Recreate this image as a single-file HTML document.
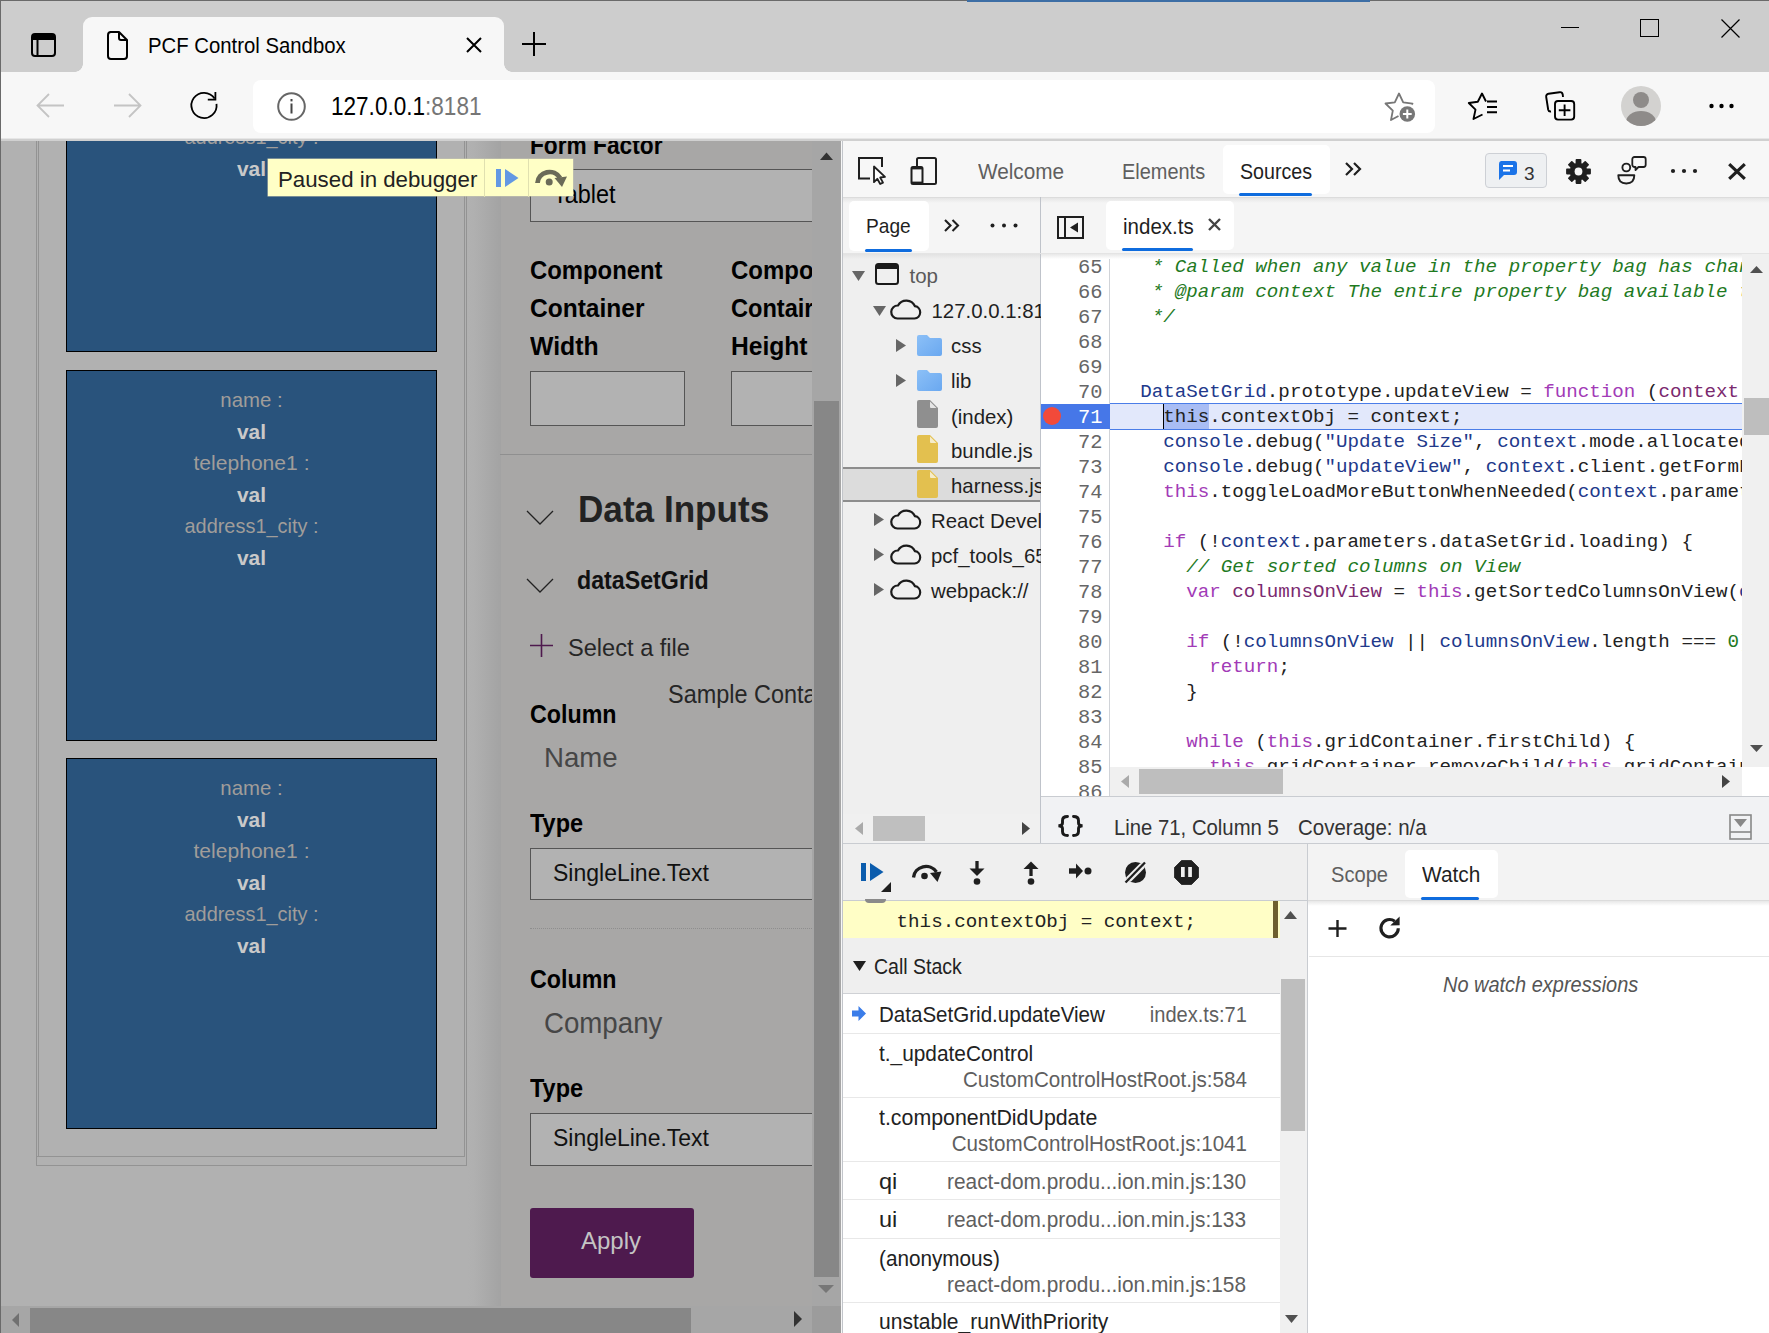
<!DOCTYPE html>
<html><head><meta charset="utf-8">
<style>
*{box-sizing:border-box;margin:0;padding:0}
html,body{width:1769px;height:1333px;overflow:hidden;background:#cdcdcd;font-family:"Liberation Sans",sans-serif}
.a{position:absolute}
.t{position:absolute;white-space:nowrap;line-height:1}
.m{font-family:"Liberation Mono",monospace}
svg{position:absolute;overflow:visible}
</style></head><body>

<div class="a" style="left:0px;top:140px;width:842px;height:1193px;background:#b1b1b1;"></div>
<div class="a" style="left:36px;top:140px;width:1px;height:1026px;background:#939393;"></div>
<div class="a" style="left:38px;top:140px;width:1px;height:1017px;background:#939393;"></div>
<div class="a" style="left:464px;top:140px;width:1px;height:1017px;background:#939393;"></div>
<div class="a" style="left:466px;top:140px;width:1px;height:1026px;background:#939393;"></div>
<div class="a" style="left:36px;top:1156px;width:429px;height:1px;background:#939393;"></div>
<div class="a" style="left:36px;top:1165px;width:431px;height:1px;background:#939393;"></div>
<div class="a" style="left:66px;top:-19px;width:371px;height:371px;background:#29537c;border:1px solid #000"></div>
<div class="t" style="left:66px;width:371px;text-align:center;top:-0.5px;font-size:21px;color:#a09d9a;transform:scaleX(0.9704)">name :</div>
<div class="t" style="left:66px;width:371px;text-align:center;top:31.5px;font-size:21px;font-weight:700;color:#c9c9c9;transform:scaleX(0.9930)">val</div>
<div class="t" style="left:66px;width:371px;text-align:center;top:62.5px;font-size:21px;color:#a09d9a;transform:scaleX(1.0034)">telephone1 :</div>
<div class="t" style="left:66px;width:371px;text-align:center;top:94.5px;font-size:21px;font-weight:700;color:#c9c9c9;transform:scaleX(0.9930)">val</div>
<div class="t" style="left:66px;width:371px;text-align:center;top:125.5px;font-size:21px;color:#a09d9a;transform:scaleX(0.9487)">address1_city :</div>
<div class="t" style="left:66px;width:371px;text-align:center;top:157.5px;font-size:21px;font-weight:700;color:#c9c9c9;transform:scaleX(0.9930)">val</div>
<div class="a" style="left:66px;top:370px;width:371px;height:371px;background:#29537c;border:1px solid #000"></div>
<div class="t" style="left:66px;width:371px;text-align:center;top:388.5px;font-size:21px;color:#a09d9a;transform:scaleX(0.9704)">name :</div>
<div class="t" style="left:66px;width:371px;text-align:center;top:420.5px;font-size:21px;font-weight:700;color:#c9c9c9;transform:scaleX(0.9930)">val</div>
<div class="t" style="left:66px;width:371px;text-align:center;top:451.5px;font-size:21px;color:#a09d9a;transform:scaleX(1.0034)">telephone1 :</div>
<div class="t" style="left:66px;width:371px;text-align:center;top:483.5px;font-size:21px;font-weight:700;color:#c9c9c9;transform:scaleX(0.9930)">val</div>
<div class="t" style="left:66px;width:371px;text-align:center;top:514.5px;font-size:21px;color:#a09d9a;transform:scaleX(0.9487)">address1_city :</div>
<div class="t" style="left:66px;width:371px;text-align:center;top:546.5px;font-size:21px;font-weight:700;color:#c9c9c9;transform:scaleX(0.9930)">val</div>
<div class="a" style="left:66px;top:758px;width:371px;height:371px;background:#29537c;border:1px solid #000"></div>
<div class="t" style="left:66px;width:371px;text-align:center;top:776.5px;font-size:21px;color:#a09d9a;transform:scaleX(0.9704)">name :</div>
<div class="t" style="left:66px;width:371px;text-align:center;top:808.5px;font-size:21px;font-weight:700;color:#c9c9c9;transform:scaleX(0.9930)">val</div>
<div class="t" style="left:66px;width:371px;text-align:center;top:839.5px;font-size:21px;color:#a09d9a;transform:scaleX(1.0034)">telephone1 :</div>
<div class="t" style="left:66px;width:371px;text-align:center;top:871.5px;font-size:21px;font-weight:700;color:#c9c9c9;transform:scaleX(0.9930)">val</div>
<div class="t" style="left:66px;width:371px;text-align:center;top:902.5px;font-size:21px;color:#a09d9a;transform:scaleX(0.9487)">address1_city :</div>
<div class="t" style="left:66px;width:371px;text-align:center;top:934.5px;font-size:21px;font-weight:700;color:#c9c9c9;transform:scaleX(0.9930)">val</div>
<div class="a" style="left:467px;top:140px;width:34px;height:1166px;background:linear-gradient(to right,#b1b1b1 0%,#b0b0b0 20%,#a3a3a3 100%)"></div>
<div class="a" style="left:501px;top:140px;width:311px;height:1166px;background:#a8a7a6;"></div>
<div class="t" style="left:530px;top:132.5px;font-size:25px;color:#000;font-weight:700;font-style:normal;font-family:'Liberation Sans';transform:scaleX(0.9084);transform-origin:0 0;">Form Factor</div>
<div class="a" style="left:530px;top:169px;width:290px;height:53px;background:#b2b2b2;border:1px solid #555;border-right:none"></div>
<div class="t" style="left:553px;top:182.3px;font-size:25px;color:#000;font-weight:400;font-style:normal;font-family:'Liberation Sans';transform:scaleX(0.9368);transform-origin:0 0;">Tablet</div>
<div class="t" style="left:530px;top:258.4px;font-size:25.5px;color:#000;font-weight:700;font-style:normal;font-family:'Liberation Sans';transform:scaleX(0.9356);transform-origin:0 0;">Component</div>
<div class="t" style="left:731px;top:258.4px;font-size:25.5px;color:#000;font-weight:700;font-style:normal;font-family:'Liberation Sans';transform:scaleX(0.9397);transform-origin:0 0;">Compo</div>
<div class="t" style="left:530px;top:295.6px;font-size:25.5px;color:#000;font-weight:700;font-style:normal;font-family:'Liberation Sans';transform:scaleX(0.9623);transform-origin:0 0;">Container</div>
<div class="t" style="left:731px;top:295.6px;font-size:25.5px;color:#000;font-weight:700;font-style:normal;font-family:'Liberation Sans';transform:scaleX(0.9247);transform-origin:0 0;">Contair</div>
<div class="t" style="left:530px;top:334.0px;font-size:25.5px;color:#000;font-weight:700;font-style:normal;font-family:'Liberation Sans';transform:scaleX(0.9710);transform-origin:0 0;">Width</div>
<div class="t" style="left:731px;top:334.0px;font-size:25.5px;color:#000;font-weight:700;font-style:normal;font-family:'Liberation Sans';transform:scaleX(0.9647);transform-origin:0 0;">Height</div>
<div class="a" style="left:530px;top:371px;width:155px;height:55px;background:#b2b2b2;border:1px solid #555"></div>
<div class="a" style="left:731px;top:371px;width:90px;height:55px;background:#b2b2b2;border:1px solid #555;border-right:none"></div>
<div class="a" style="left:500px;top:454px;width:312px;height:1px;background:#8f8f8f;"></div>
<svg style="left:526px;top:510px" width="28" height="15" viewBox="0 0 28 15"><path d="M1 1 L14 14 L27 1" fill="none" stroke="#222" stroke-width="1.3"/></svg>
<div class="t" style="left:578px;top:491.2px;font-size:37.5px;color:#222;font-weight:700;font-style:normal;font-family:'Liberation Sans';transform:scaleX(0.9366);transform-origin:0 0;">Data Inputs</div>
<svg style="left:526px;top:578px" width="28" height="15" viewBox="0 0 28 15"><path d="M1 1 L14 14 L27 1" fill="none" stroke="#222" stroke-width="1.3"/></svg>
<div class="t" style="left:577px;top:567.0px;font-size:26px;color:#111;font-weight:700;font-style:normal;font-family:'Liberation Sans';transform:scaleX(0.8927);transform-origin:0 0;">dataSetGrid</div>
<svg style="left:530px;top:634px" width="23" height="23" viewBox="0 0 23 23"><path d="M11.5 0 V23 M0 11.5 H23" stroke="#4e1a4e" stroke-width="1.6"/></svg>
<div class="t" style="left:568px;top:635.5px;font-size:24.6px;color:#262626;font-weight:400;font-style:normal;font-family:'Liberation Sans';transform:scaleX(0.9594);transform-origin:0 0;">Select a file</div>
<div class="t" style="left:668px;top:682.2px;font-size:25px;color:#262626;font-weight:400;font-style:normal;font-family:'Liberation Sans';transform:scaleX(0.9373);transform-origin:0 0;">Sample Conta</div>
<div class="t" style="left:530px;top:701.5px;font-size:25.2px;color:#000;font-weight:700;font-style:normal;font-family:'Liberation Sans';transform:scaleX(0.9228);transform-origin:0 0;">Column</div>
<div class="t" style="left:544px;top:743.6px;font-size:28px;color:#464646;font-weight:400;font-style:normal;font-family:'Liberation Sans';transform:scaleX(0.9863);transform-origin:0 0;">Name</div>
<div class="t" style="left:530px;top:811.3px;font-size:25px;color:#000;font-weight:700;font-style:normal;font-family:'Liberation Sans';transform:scaleX(0.9398);transform-origin:0 0;">Type</div>
<div class="a" style="left:530px;top:848px;width:290px;height:52px;background:#b2b2b2;border:1px solid #555;border-right:none"></div>
<div class="t" style="left:553px;top:862.2px;font-size:23px;color:#111;font-weight:400;font-style:normal;font-family:'Liberation Sans';">SingleLine.Text</div>
<div class="a" style="left:530px;top:928px;width:282px;height:0;border-top:1px dotted #8e8e8e"></div>
<div class="t" style="left:530px;top:966.5px;font-size:25.2px;color:#000;font-weight:700;font-style:normal;font-family:'Liberation Sans';transform:scaleX(0.9228);transform-origin:0 0;">Column</div>
<div class="t" style="left:544px;top:1009.3px;font-size:28.8px;color:#464646;font-weight:400;font-style:normal;font-family:'Liberation Sans';transform:scaleX(0.9601);transform-origin:0 0;">Company</div>
<div class="t" style="left:530px;top:1076.2px;font-size:25px;color:#000;font-weight:700;font-style:normal;font-family:'Liberation Sans';transform:scaleX(0.9398);transform-origin:0 0;">Type</div>
<div class="a" style="left:530px;top:1113px;width:290px;height:53px;background:#b2b2b2;border:1px solid #555;border-right:none"></div>
<div class="t" style="left:553px;top:1126.9px;font-size:23px;color:#111;font-weight:400;font-style:normal;font-family:'Liberation Sans';">SingleLine.Text</div>
<div class="a" style="left:530px;top:1208px;width:164px;height:70px;background:#4e1a4e;border-radius:3px"></div>
<div class="t" style="left:581px;top:1229.4px;font-size:24px;color:#c4c4c4;font-weight:400;font-style:normal;font-family:'Liberation Sans';">Apply</div>
<div class="a" style="left:812px;top:140px;width:30px;height:1166px;background:#a6a6a6;"></div>
<svg style="left:820px;top:152px" width="13" height="8" viewBox="0 0 13 8"><path d="M0 8 L6.5 0.5 L13 8Z" fill="#333"/></svg>
<div class="a" style="left:814px;top:401px;width:25px;height:876px;background:#878787;"></div>
<svg style="left:818px;top:1284px" width="16" height="10" viewBox="0 0 16 10"><path d="M0 1 L8 9 L16 1Z" fill="#777"/></svg>
<div class="a" style="left:0px;top:1306px;width:812px;height:27px;background:#a6a6a6;"></div>
<div class="a" style="left:30px;top:1308px;width:661px;height:25px;background:#878787;"></div>
<svg style="left:12px;top:1313px" width="7" height="14" viewBox="0 0 7 14"><path d="M7 0 L0 7 L7 14Z" fill="#707070"/></svg>
<svg style="left:794px;top:1311px" width="8" height="16" viewBox="0 0 8 16"><path d="M0 0 L8 8 L0 16Z" fill="#333"/></svg>
<div class="a" style="left:812px;top:1306px;width:30px;height:27px;background:#9c9c9c;"></div>
<div class="a" style="left:268px;top:159px;width:305px;height:37px;background:#ffffc6;box-shadow:0 0 0 0.5px #c8c8b0"></div>
<div class="t" style="left:278px;top:168.6px;font-size:21.7px;color:#222;font-weight:400;font-style:normal;font-family:'Liberation Sans';transform:scaleX(1.0266);transform-origin:0 0;">Paused in debugger</div>
<div class="a" style="left:484px;top:159px;width:1px;height:38px;background:#e0e0b0;"></div>
<div class="a" style="left:528px;top:159px;width:1px;height:38px;background:#e0e0b0;"></div>
<svg style="left:496px;top:169px" width="23" height="18" viewBox="0 0 23 18"><rect x="0" y="0" width="5" height="18" fill="#6398e3"/><path d="M9 0 L22.5 9 L9 18Z" fill="#6398e3"/></svg>
<svg style="left:533px;top:166px" width="36" height="24" viewBox="0 0 36 24"><path d="M4.5 17 A12 11.5 0 0 1 27 12" fill="none" stroke="#6b6b58" stroke-width="4.8"/><path d="M21.5 12 L34 10.5 L29 21Z" fill="#6b6b58"/><circle cx="16.2" cy="16" r="3.5" fill="#6b6b58"/></svg>
<div class="a" style="left:841px;top:140px;width:1px;height:1193px;background:#f7f7f7;"></div>
<div class="a" style="left:842px;top:140px;width:1px;height:1193px;background:#c2c5ca;"></div>
<div class="a" style="left:843px;top:140px;width:926px;height:57px;background:#f7f7f7;"></div>
<div class="a" style="left:843px;top:197px;width:926px;height:1px;background:#dcdcdc;"></div>
<div class="a" style="left:843px;top:198px;width:926px;height:5px;background:linear-gradient(#e6e6e6,#f5f5f5)"></div>
<svg style="left:858px;top:157px" width="28" height="28" viewBox="0 0 28 28"><path d="M12 21.5 H1 V1 H24 V10" fill="none" stroke="#1f1f1f" stroke-width="2"/><path d="M16 9.5 V25.2 L19.3 21.8 L22.2 27 L25 25.6 L22.2 20.5 L27 19.8Z" fill="#fff" stroke="#1f1f1f" stroke-width="1.8" stroke-linejoin="round"/></svg>
<svg style="left:910px;top:157px" width="28" height="28" viewBox="0 0 28 28"><rect x="7" y="1" width="19" height="26" rx="1.5" fill="none" stroke="#1f1f1f" stroke-width="2"/><rect x="1.5" y="10" width="11" height="17" rx="1.5" fill="#f7f7f7" stroke="#1f1f1f" stroke-width="2"/><rect x="1.5" y="9.8" width="11" height="2.6" fill="#1f1f1f"/><rect x="1.5" y="24.6" width="11" height="2.4" fill="#1f1f1f"/></svg>
<div class="t" style="left:977.5px;top:160.9px;font-size:22px;color:#5f5f5f;font-weight:400;font-style:normal;font-family:'Liberation Sans';transform:scaleX(0.9433);transform-origin:0 0;">Welcome</div>
<div class="t" style="left:1121.5px;top:160.9px;font-size:22px;color:#5f5f5f;font-weight:400;font-style:normal;font-family:'Liberation Sans';transform:scaleX(0.9062);transform-origin:0 0;">Elements</div>
<div class="a" style="left:1223px;top:145px;width:107px;height:49px;background:#ffffff;border-radius:5px"></div>
<div class="t" style="left:1240px;top:160.9px;font-size:22px;color:#1f1f1f;font-weight:400;font-style:normal;font-family:'Liberation Sans';transform:scaleX(0.8935);transform-origin:0 0;">Sources</div>
<div class="a" style="left:1239px;top:193px;width:73px;height:3px;background:#0f6cde;border-radius:2px"></div>
<svg style="left:1345px;top:162px" width="17" height="14" viewBox="0 0 17 14"><path d="M1 1 L7 7 L1 13 M9 1 L15 7 L9 13" fill="none" stroke="#1f1f1f" stroke-width="2.2"/></svg>
<div class="a" style="left:1485px;top:153px;width:62px;height:35px;background:#eef0f2;border:1px solid #cdd0d5;border-radius:4px"></div>
<svg style="left:1498px;top:161px" width="20" height="20" viewBox="0 0 20 20"><path d="M3 0 H16 a3 3 0 0 1 3 3 V11 a3 3 0 0 1 -3 3 H6 L1 19 V3 a3 3 0 0 1 2 -3Z" fill="#1a73e8"/><path d="M5 5 H15 M5 9.5 H12" stroke="#fff" stroke-width="1.8"/></svg>
<div class="t" style="left:1524px;top:163.6px;font-size:19px;color:#333;font-weight:400;font-style:normal;font-family:'Liberation Sans';">3</div>
<svg style="left:1566px;top:159px" width="25" height="25" viewBox="0 0 25 25"><g transform="translate(12.5 12.5)"><circle r="8.8" fill="#1f1f1f"/><g fill="#1f1f1f"><rect x="-2.9" y="-12.4" width="5.8" height="6" rx="0.8" transform="rotate(0)"/><rect x="-2.9" y="-12.4" width="5.8" height="6" rx="0.8" transform="rotate(45)"/><rect x="-2.9" y="-12.4" width="5.8" height="6" rx="0.8" transform="rotate(90)"/><rect x="-2.9" y="-12.4" width="5.8" height="6" rx="0.8" transform="rotate(135)"/><rect x="-2.9" y="-12.4" width="5.8" height="6" rx="0.8" transform="rotate(180)"/><rect x="-2.9" y="-12.4" width="5.8" height="6" rx="0.8" transform="rotate(225)"/><rect x="-2.9" y="-12.4" width="5.8" height="6" rx="0.8" transform="rotate(270)"/><rect x="-2.9" y="-12.4" width="5.8" height="6" rx="0.8" transform="rotate(315)"/></g><circle r="3.9" fill="#f7f7f7"/></g></svg>
<svg style="left:1617px;top:156px" width="30" height="30" viewBox="0 0 30 30"><circle cx="9.3" cy="11.5" r="3.9" fill="none" stroke="#1f1f1f" stroke-width="1.9"/><path d="M1.3 19.3 H17.3 Q17.3 27.5 9.3 27.5 Q1.3 27.5 1.3 19.3Z" fill="none" stroke="#1f1f1f" stroke-width="1.9" stroke-linejoin="round"/><path d="M17.5 1 H26.5 a2.2 2.2 0 0 1 2.2 2.2 V8.8 a2.2 2.2 0 0 1 -2.2 2.2 H21.5 L18.5 14 V11 H17.5 a2.2 2.2 0 0 1 -2.2 -2.2 V3.2 a2.2 2.2 0 0 1 2.2 -2.2Z" fill="none" stroke="#1f1f1f" stroke-width="1.8" stroke-linejoin="round"/></svg>
<svg style="left:1670px;top:168px" width="28" height="6" viewBox="0 0 28 6"><circle cx="3" cy="3" r="2.1" fill="#1f1f1f"/><circle cx="14" cy="3" r="2.1" fill="#1f1f1f"/><circle cx="25" cy="3" r="2.1" fill="#1f1f1f"/></svg>
<svg style="left:1728px;top:163px" width="18" height="17" viewBox="0 0 18 17"><path d="M1.2 1.2 L16.8 15.8 M16.8 1.2 L1.2 15.8" stroke="#1f1f1f" stroke-width="3.2"/></svg>
<div class="a" style="left:843px;top:203px;width:926px;height:50px;background:#f5f5f5;"></div>
<div class="a" style="left:849px;top:201px;width:80px;height:50px;background:#ffffff;border-radius:5px"></div>
<div class="t" style="left:866px;top:216.0px;font-size:20.6px;color:#1f1f1f;font-weight:400;font-style:normal;font-family:'Liberation Sans';transform:scaleX(0.9299);transform-origin:0 0;">Page</div>
<div class="a" style="left:865px;top:249px;width:47px;height:3px;background:#0f6cde;border-radius:2px"></div>
<svg style="left:944px;top:219px" width="16" height="13" viewBox="0 0 16 13"><path d="M1 1 L6.5 6.5 L1 12 M8.5 1 L14 6.5 L8.5 12" fill="none" stroke="#1f1f1f" stroke-width="2.1"/></svg>
<svg style="left:990px;top:223px" width="28" height="5" viewBox="0 0 28 5"><circle cx="2.5" cy="2.5" r="2" fill="#1f1f1f"/><circle cx="14" cy="2.5" r="2" fill="#1f1f1f"/><circle cx="25.5" cy="2.5" r="2" fill="#1f1f1f"/></svg>
<div class="a" style="left:1040px;top:197px;width:1px;height:646px;background:#bfc3ca;"></div>
<svg style="left:1057px;top:216px" width="27" height="23" viewBox="0 0 27 23"><rect x="1" y="1" width="25" height="21" fill="none" stroke="#1f1f1f" stroke-width="2"/><line x1="8" y1="1" x2="8" y2="22" stroke="#1f1f1f" stroke-width="2"/><path d="M21 6.5 V16.5 L13 11.5Z" fill="#1f1f1f"/></svg>
<div class="a" style="left:1106px;top:201px;width:128px;height:49px;background:#ffffff;border-radius:5px"></div>
<div class="t" style="left:1123px;top:215.8px;font-size:22.5px;color:#1f1f1f;font-weight:400;font-style:normal;font-family:'Liberation Sans';transform:scaleX(0.9124);transform-origin:0 0;">index.ts</div>
<svg style="left:1208px;top:218px" width="13" height="13" viewBox="0 0 13 13"><path d="M1 1 L12 12 M12 1 L1 12" stroke="#444" stroke-width="2.4"/></svg>
<div class="a" style="left:1122px;top:248px;width:71px;height:3px;background:#0f6cde;border-radius:2px"></div>
<div class="a" style="left:843px;top:253px;width:926px;height:1px;background:#e4e4e4;"></div>
<div class="a" style="left:843px;top:254px;width:197px;height:589px;background:#efefef;"></div>
<div class="a" style="left:843px;top:254px;width:197px;height:5px;background:linear-gradient(#e2e2e2,#efefef)"></div>
<svg style="left:852px;top:271px" width="13" height="10" viewBox="0 0 13 10"><path d="M0 0 H13 L6.5 10Z" fill="#666"/></svg>
<svg style="left:875px;top:263px" width="24" height="22" viewBox="0 0 24 22"><rect x="1" y="1" width="22" height="20" rx="2.5" fill="none" stroke="#1a1a1a" stroke-width="2"/><rect x="1" y="1" width="22" height="5" fill="#1a1a1a"/></svg>
<div class="t" style="left:909.5px;top:266.0px;font-size:20.5px;color:#5a5a5a;font-weight:400;font-style:normal;font-family:'Liberation Sans';">top</div>
<svg style="left:873px;top:306px" width="13" height="10" viewBox="0 0 13 10"><path d="M0 0 H13 L6.5 10Z" fill="#666"/></svg>
<svg style="left:890px;top:299px" width="32" height="21" viewBox="0 0 32 21"><path d="M7.5 19.5 H24.5 a6.2 6.2 0 0 0 0.5 -12.3 A9.5 9.5 0 0 0 8 6.5 a6.5 6.5 0 0 0 -0.5 13Z" fill="none" stroke="#1a1a1a" stroke-width="2.2" stroke-linejoin="round"/></svg>
<div class="t" style="left:931.5px;top:301.2px;font-size:20.4px;color:#1f1f1f;font-weight:400;font-style:normal;font-family:'Liberation Sans';">127.0.0.1:8181</div>
<svg style="left:896px;top:339px" width="10" height="13" viewBox="0 0 10 13"><path d="M0 0 V13 L10 6.5Z" fill="#666"/></svg>
<svg style="left:917px;top:335px" width="25" height="21" viewBox="0 0 25 21"><defs><linearGradient id="fg" x1="0" y1="0" x2="1" y2="1"><stop offset="0" stop-color="#8cc0f7"/><stop offset="1" stop-color="#6aa8f0"/></linearGradient></defs><path d="M2 0 H10 L13 3 H23 a2 2 0 0 1 2 2 V19 a2 2 0 0 1 -2 2 H2 a2 2 0 0 1 -2 -2 V2 a2 2 0 0 1 2 -2Z" fill="url(#fg)"/></svg>
<div class="t" style="left:951px;top:336.3px;font-size:20.4px;color:#1f1f1f;font-weight:400;font-style:normal;font-family:'Liberation Sans';">css</div>
<svg style="left:896px;top:374px" width="10" height="13" viewBox="0 0 10 13"><path d="M0 0 V13 L10 6.5Z" fill="#666"/></svg>
<svg style="left:917px;top:370px" width="25" height="21" viewBox="0 0 25 21"><defs><linearGradient id="fg" x1="0" y1="0" x2="1" y2="1"><stop offset="0" stop-color="#8cc0f7"/><stop offset="1" stop-color="#6aa8f0"/></linearGradient></defs><path d="M2 0 H10 L13 3 H23 a2 2 0 0 1 2 2 V19 a2 2 0 0 1 -2 2 H2 a2 2 0 0 1 -2 -2 V2 a2 2 0 0 1 2 -2Z" fill="url(#fg)"/></svg>
<div class="t" style="left:951px;top:371.4px;font-size:20.4px;color:#1f1f1f;font-weight:400;font-style:normal;font-family:'Liberation Sans';">lib</div>
<svg style="left:917px;top:400px" width="21" height="28" viewBox="0 0 21 28"><path d="M2 0 H13 L21 8 V26 a2 2 0 0 1 -2 2 H2 a2 2 0 0 1 -2 -2 V2 a2 2 0 0 1 2 -2Z" fill="#8f8f8f"/><path d="M13 1.5 L19.5 8 H14 a1 1 0 0 1 -1 -1Z" fill="#e6e6e6"/></svg>
<div class="t" style="left:951px;top:406.6px;font-size:20.4px;color:#1f1f1f;font-weight:400;font-style:normal;font-family:'Liberation Sans';">(index)</div>
<svg style="left:917px;top:435px" width="21" height="28" viewBox="0 0 21 28"><path d="M2 0 H13 L21 8 V26 a2 2 0 0 1 -2 2 H2 a2 2 0 0 1 -2 -2 V2 a2 2 0 0 1 2 -2Z" fill="#e3c04f"/><path d="M13 1.5 L19.5 8 H14 a1 1 0 0 1 -1 -1Z" fill="#f5eccb"/></svg>
<div class="t" style="left:951px;top:441.4px;font-size:20.4px;color:#1f1f1f;font-weight:400;font-style:normal;font-family:'Liberation Sans';">bundle.js</div>
<div class="a" style="left:843px;top:467px;width:197px;height:35px;background:#dcdcdc;border-top:2px solid #8d8d8d;border-bottom:2px solid #8d8d8d"></div>
<svg style="left:917px;top:470px" width="21" height="28" viewBox="0 0 21 28"><path d="M2 0 H13 L21 8 V26 a2 2 0 0 1 -2 2 H2 a2 2 0 0 1 -2 -2 V2 a2 2 0 0 1 2 -2Z" fill="#e3c04f"/><path d="M13 1.5 L19.5 8 H14 a1 1 0 0 1 -1 -1Z" fill="#f5eccb"/></svg>
<div class="t" style="left:951px;top:476.1px;font-size:20.4px;color:#1f1f1f;font-weight:400;font-style:normal;font-family:'Liberation Sans';">harness.js</div>
<svg style="left:874px;top:513px" width="10" height="13" viewBox="0 0 10 13"><path d="M0 0 V13 L10 6.5Z" fill="#666"/></svg>
<svg style="left:890px;top:509px" width="32" height="21" viewBox="0 0 32 21"><path d="M7.5 19.5 H24.5 a6.2 6.2 0 0 0 0.5 -12.3 A9.5 9.5 0 0 0 8 6.5 a6.5 6.5 0 0 0 -0.5 13Z" fill="none" stroke="#1a1a1a" stroke-width="2.2" stroke-linejoin="round"/></svg>
<div class="t" style="left:931px;top:510.9px;font-size:20.4px;color:#1f1f1f;font-weight:400;font-style:normal;font-family:'Liberation Sans';">React Developer Tools</div>
<svg style="left:874px;top:548px" width="10" height="13" viewBox="0 0 10 13"><path d="M0 0 V13 L10 6.5Z" fill="#666"/></svg>
<svg style="left:890px;top:544px" width="32" height="21" viewBox="0 0 32 21"><path d="M7.5 19.5 H24.5 a6.2 6.2 0 0 0 0.5 -12.3 A9.5 9.5 0 0 0 8 6.5 a6.5 6.5 0 0 0 -0.5 13Z" fill="none" stroke="#1a1a1a" stroke-width="2.2" stroke-linejoin="round"/></svg>
<div class="t" style="left:931px;top:545.7px;font-size:20.4px;color:#1f1f1f;font-weight:400;font-style:normal;font-family:'Liberation Sans';">pcf_tools_652ac3f36e1e4bca82eb3c1dc44e6fad</div>
<svg style="left:874px;top:583px" width="10" height="13" viewBox="0 0 10 13"><path d="M0 0 V13 L10 6.5Z" fill="#666"/></svg>
<svg style="left:890px;top:579px" width="32" height="21" viewBox="0 0 32 21"><path d="M7.5 19.5 H24.5 a6.2 6.2 0 0 0 0.5 -12.3 A9.5 9.5 0 0 0 8 6.5 a6.5 6.5 0 0 0 -0.5 13Z" fill="none" stroke="#1a1a1a" stroke-width="2.2" stroke-linejoin="round"/></svg>
<div class="t" style="left:931px;top:581.2px;font-size:20.4px;color:#1f1f1f;font-weight:400;font-style:normal;font-family:'Liberation Sans';">webpack://</div>
<div class="a" style="left:843px;top:814px;width:197px;height:29px;background:#f0f0f0;"></div>
<svg style="left:855px;top:822px" width="8" height="13" viewBox="0 0 8 13"><path d="M8 0 V13 L0 6.5Z" fill="#aaa"/></svg>
<div class="a" style="left:873px;top:816px;width:52px;height:25px;background:#bfbfbf;"></div>
<svg style="left:1022px;top:822px" width="8" height="13" viewBox="0 0 8 13"><path d="M0 0 V13 L8 6.5Z" fill="#444"/></svg>
<div class="a" style="left:843px;top:843px;width:926px;height:1px;background:#c9ccd1;"></div>
<div class="a" style="left:1041px;top:254px;width:728px;height:543px;background:#ffffff;"></div>
<div class="a" style="left:1041px;top:254px;width:68px;height:543px;background:#ffffff;"></div>
<div class="a" style="left:1109px;top:254px;width:1px;height:543px;background:#d0d3d8;"></div>
<div class="a" style="left:1041px;top:254px;width:728px;height:5px;background:linear-gradient(#e8e8e8,#fff)"></div>
<div class="a" style="left:1041px;top:404px;width:69px;height:25px;background:#4677e8;"></div>
<div class="a" style="left:1110px;top:403px;width:632px;height:27px;background:#e2e8fb;border-top:1px solid #4a7de8;border-bottom:1px solid #4a7de8"></div>
<div class="a" style="left:1164px;top:404px;width:45px;height:25px;background:#a9bdf4;"></div>
<div class="a" style="left:1163px;top:404px;width:1px;height:25px;background:#000;"></div>
<svg style="left:1043px;top:407px" width="18" height="18" viewBox="0 0 18 18"><circle cx="9" cy="9" r="9" fill="#f24a3a"/></svg>
<div class="a" style="left:1110px;top:254px;width:632px;height:513px;overflow:hidden">
<div class="t" style="left:30.200000000000045px;top:4.3px;font-size:19.2px;font-family:'Liberation Mono'"><span style="color:#1f7a1f;font-style:italic;">&nbsp;*&nbsp;Called&nbsp;when&nbsp;any&nbsp;value&nbsp;in&nbsp;the&nbsp;property&nbsp;bag&nbsp;has&nbsp;changed</span></div>
<div class="t" style="left:30.200000000000045px;top:29.3px;font-size:19.2px;font-family:'Liberation Mono'"><span style="color:#1f7a1f;font-style:italic;">&nbsp;*&nbsp;@param&nbsp;context&nbsp;The&nbsp;entire&nbsp;property&nbsp;bag&nbsp;available&nbsp;to&nbsp;control</span></div>
<div class="t" style="left:30.200000000000045px;top:54.3px;font-size:19.2px;font-family:'Liberation Mono'"><span style="color:#1f7a1f;font-style:italic;">&nbsp;*/</span></div>
<div class="t" style="left:30.200000000000045px;top:129.3px;font-size:19.2px;font-family:'Liberation Mono'"><span style="color:#22398b;">DataSetGrid</span><span style="color:#222;">.prototype.updateView&nbsp;=&nbsp;</span><span style="color:#a23bb7;">function</span><span style="color:#222;">&nbsp;(</span><span style="color:#7b2a6f;">context</span></div>
<div class="t" style="left:30.200000000000045px;top:154.3px;font-size:19.2px;font-family:'Liberation Mono'"><span style="color:#222;">&nbsp;&nbsp;this.contextObj&nbsp;=&nbsp;context;</span></div>
<div class="t" style="left:30.200000000000045px;top:179.3px;font-size:19.2px;font-family:'Liberation Mono'"><span style="color:#222;">&nbsp;&nbsp;</span><span style="color:#22398b;">console</span><span style="color:#222;">.debug(</span><span style="color:#22398b;">"Update&nbsp;Size"</span><span style="color:#222;">,&nbsp;</span><span style="color:#22398b;">context</span><span style="color:#222;">.mode.allocatedWidth</span></div>
<div class="t" style="left:30.200000000000045px;top:204.3px;font-size:19.2px;font-family:'Liberation Mono'"><span style="color:#222;">&nbsp;&nbsp;</span><span style="color:#22398b;">console</span><span style="color:#222;">.debug(</span><span style="color:#22398b;">"updateView"</span><span style="color:#222;">,&nbsp;</span><span style="color:#22398b;">context</span><span style="color:#222;">.client.getFormFactor</span></div>
<div class="t" style="left:30.200000000000045px;top:229.3px;font-size:19.2px;font-family:'Liberation Mono'"><span style="color:#222;">&nbsp;&nbsp;</span><span style="color:#a23bb7;">this</span><span style="color:#222;">.toggleLoadMoreButtonWhenNeeded(</span><span style="color:#22398b;">context</span><span style="color:#222;">.parameters</span></div>
<div class="t" style="left:30.200000000000045px;top:279.3px;font-size:19.2px;font-family:'Liberation Mono'"><span style="color:#222;">&nbsp;&nbsp;</span><span style="color:#a23bb7;">if</span><span style="color:#222;">&nbsp;(!</span><span style="color:#22398b;">context</span><span style="color:#222;">.parameters.dataSetGrid.loading)&nbsp;{</span></div>
<div class="t" style="left:30.200000000000045px;top:304.3px;font-size:19.2px;font-family:'Liberation Mono'"><span style="color:#1f7a1f;font-style:italic;">&nbsp;&nbsp;&nbsp;&nbsp;//&nbsp;Get&nbsp;sorted&nbsp;columns&nbsp;on&nbsp;View</span></div>
<div class="t" style="left:30.200000000000045px;top:329.3px;font-size:19.2px;font-family:'Liberation Mono'"><span style="color:#222;">&nbsp;&nbsp;&nbsp;&nbsp;</span><span style="color:#a23bb7;">var</span><span style="color:#222;">&nbsp;</span><span style="color:#7b2a6f;">columnsOnView</span><span style="color:#222;">&nbsp;=&nbsp;</span><span style="color:#a23bb7;">this</span><span style="color:#222;">.getSortedColumnsOnView(</span><span style="color:#22398b;">context</span></div>
<div class="t" style="left:30.200000000000045px;top:379.3px;font-size:19.2px;font-family:'Liberation Mono'"><span style="color:#222;">&nbsp;&nbsp;&nbsp;&nbsp;</span><span style="color:#a23bb7;">if</span><span style="color:#222;">&nbsp;(!</span><span style="color:#22398b;">columnsOnView</span><span style="color:#222;">&nbsp;||&nbsp;</span><span style="color:#22398b;">columnsOnView</span><span style="color:#222;">.length&nbsp;===&nbsp;</span><span style="color:#1f7a1f;">0</span><span style="color:#222;">)</span></div>
<div class="t" style="left:30.200000000000045px;top:404.3px;font-size:19.2px;font-family:'Liberation Mono'"><span style="color:#222;">&nbsp;&nbsp;&nbsp;&nbsp;&nbsp;&nbsp;</span><span style="color:#a23bb7;">return</span><span style="color:#222;">;</span></div>
<div class="t" style="left:30.200000000000045px;top:429.3px;font-size:19.2px;font-family:'Liberation Mono'"><span style="color:#222;">&nbsp;&nbsp;&nbsp;&nbsp;}</span></div>
<div class="t" style="left:30.200000000000045px;top:479.3px;font-size:19.2px;font-family:'Liberation Mono'"><span style="color:#222;">&nbsp;&nbsp;&nbsp;&nbsp;</span><span style="color:#a23bb7;">while</span><span style="color:#222;">&nbsp;(</span><span style="color:#a23bb7;">this</span><span style="color:#222;">.gridContainer.firstChild)&nbsp;{</span></div>
<div class="t" style="left:30.200000000000045px;top:504.3px;font-size:19.2px;font-family:'Liberation Mono'"><span style="color:#222;">&nbsp;&nbsp;&nbsp;&nbsp;&nbsp;&nbsp;</span><span style="color:#a23bb7;">this</span><span style="color:#222;">.gridContainer.removeChild(</span><span style="color:#a23bb7;">this</span><span style="color:#222;">.gridContainer.firstChild</span></div>
</div>
<div class="t m" style="left:1041px;width:61.5px;text-align:right;top:257.9px;font-size:20.4px;color:#666">65</div>
<div class="t m" style="left:1041px;width:61.5px;text-align:right;top:282.9px;font-size:20.4px;color:#666">66</div>
<div class="t m" style="left:1041px;width:61.5px;text-align:right;top:307.9px;font-size:20.4px;color:#666">67</div>
<div class="t m" style="left:1041px;width:61.5px;text-align:right;top:332.9px;font-size:20.4px;color:#666">68</div>
<div class="t m" style="left:1041px;width:61.5px;text-align:right;top:357.9px;font-size:20.4px;color:#666">69</div>
<div class="t m" style="left:1041px;width:61.5px;text-align:right;top:382.9px;font-size:20.4px;color:#666">70</div>
<div class="t m" style="left:1041px;width:61.5px;text-align:right;top:407.9px;font-size:20.4px;color:#fff">71</div>
<div class="t m" style="left:1041px;width:61.5px;text-align:right;top:432.9px;font-size:20.4px;color:#666">72</div>
<div class="t m" style="left:1041px;width:61.5px;text-align:right;top:457.9px;font-size:20.4px;color:#666">73</div>
<div class="t m" style="left:1041px;width:61.5px;text-align:right;top:482.9px;font-size:20.4px;color:#666">74</div>
<div class="t m" style="left:1041px;width:61.5px;text-align:right;top:507.9px;font-size:20.4px;color:#666">75</div>
<div class="t m" style="left:1041px;width:61.5px;text-align:right;top:532.9px;font-size:20.4px;color:#666">76</div>
<div class="t m" style="left:1041px;width:61.5px;text-align:right;top:557.9px;font-size:20.4px;color:#666">77</div>
<div class="t m" style="left:1041px;width:61.5px;text-align:right;top:582.9px;font-size:20.4px;color:#666">78</div>
<div class="t m" style="left:1041px;width:61.5px;text-align:right;top:607.9px;font-size:20.4px;color:#666">79</div>
<div class="t m" style="left:1041px;width:61.5px;text-align:right;top:632.9px;font-size:20.4px;color:#666">80</div>
<div class="t m" style="left:1041px;width:61.5px;text-align:right;top:657.9px;font-size:20.4px;color:#666">81</div>
<div class="t m" style="left:1041px;width:61.5px;text-align:right;top:682.9px;font-size:20.4px;color:#666">82</div>
<div class="t m" style="left:1041px;width:61.5px;text-align:right;top:707.9px;font-size:20.4px;color:#666">83</div>
<div class="t m" style="left:1041px;width:61.5px;text-align:right;top:732.9px;font-size:20.4px;color:#666">84</div>
<div class="t m" style="left:1041px;width:61.5px;text-align:right;top:757.9px;font-size:20.4px;color:#666">85</div>
<div class="t m" style="left:1041px;width:61.5px;text-align:right;top:782.9px;font-size:20.4px;color:#666">86</div>
<div class="a" style="left:1742px;top:254px;width:27px;height:513px;background:#f0f0f0;"></div>
<svg style="left:1750px;top:266px" width="13" height="7" viewBox="0 0 13 7"><path d="M0 7 L6.5 0 L13 7Z" fill="#505050"/></svg>
<div class="a" style="left:1744px;top:398px;width:25px;height:37px;background:#bebebe;"></div>
<svg style="left:1750px;top:745px" width="13" height="7" viewBox="0 0 13 7"><path d="M0 0 L6.5 7 L13 0Z" fill="#505050"/></svg>
<div class="a" style="left:1110px;top:767px;width:632px;height:29px;background:#f0f0f0;"></div>
<svg style="left:1121px;top:775px" width="8" height="13" viewBox="0 0 8 13"><path d="M8 0 V13 L0 6.5Z" fill="#aaa"/></svg>
<div class="a" style="left:1139px;top:769px;width:144px;height:25px;background:#bebebe;"></div>
<svg style="left:1722px;top:775px" width="8" height="13" viewBox="0 0 8 13"><path d="M0 0 V13 L8 6.5Z" fill="#444"/></svg>
<div class="a" style="left:1742px;top:767px;width:27px;height:29px;background:#ffffff;"></div>
<div class="a" style="left:1041px;top:796px;width:728px;height:1px;background:#c9ccd1;"></div>
<div class="a" style="left:1041px;top:797px;width:728px;height:46px;background:#f1f2f4;"></div>
<svg style="left:1057px;top:815px" width="28" height="22" viewBox="0 0 28 22"><path d="M10.5 1.5 Q5.5 1.5 5.5 5.5 V8 Q5.5 10.5 1.5 10.8 Q5.5 11.2 5.5 13.5 V16.5 Q5.5 20.5 10.5 20.5" fill="none" stroke="#1a1a1a" stroke-width="2.9" stroke-linecap="round"/><path d="M16.5 1.5 Q21.5 1.5 21.5 5.5 V8 Q21.5 10.5 25.5 10.8 Q21.5 11.2 21.5 13.5 V16.5 Q21.5 20.5 16.5 20.5" fill="none" stroke="#1a1a1a" stroke-width="2.9" stroke-linecap="round"/></svg>
<div class="t" style="left:1113.5px;top:818.3px;font-size:21.3px;color:#333;font-weight:400;font-style:normal;font-family:'Liberation Sans';transform:scaleX(0.9532);transform-origin:0 0;">Line 71, Column 5</div>
<div class="t" style="left:1298px;top:818.3px;font-size:21.3px;color:#333;font-weight:400;font-style:normal;font-family:'Liberation Sans';transform:scaleX(0.9617);transform-origin:0 0;">Coverage: n/a</div>
<svg style="left:1729px;top:814px" width="23" height="26" viewBox="0 0 23 26"><rect x="1" y="1" width="21" height="24" fill="none" stroke="#888" stroke-width="1.6"/><line x1="1" y1="18" x2="22" y2="18" stroke="#888" stroke-width="1.6"/><path d="M5 5 H18 L11.5 13Z" fill="#888"/></svg>
<div class="a" style="left:843px;top:844px;width:465px;height:489px;background:#efefef;"></div>
<svg style="left:861px;top:863px" width="23" height="18" viewBox="0 0 23 18"><rect x="0" y="0" width="5" height="18" fill="#0b5cad"/><path d="M9 0 L22.5 9 L9 18Z" fill="#0b5cad"/></svg>
<svg style="left:881px;top:882px" width="10" height="10" viewBox="0 0 10 10"><path d="M10 0 V10 H0Z" fill="#1f1f1f"/></svg>
<svg style="left:911px;top:863px" width="31" height="19" viewBox="0 0 31 19"><path d="M2.5 14.5 A12.5 12 0 0 1 25.5 9" fill="none" stroke="#1f1f1f" stroke-width="3.3"/><path d="M19 10 L30.5 8.5 L26.5 19Z" fill="#1f1f1f"/><circle cx="13.5" cy="13" r="3.3" fill="#1f1f1f"/></svg>
<svg style="left:969px;top:861px" width="16" height="24" viewBox="0 0 16 24"><path d="M8 0 V9" stroke="#1f1f1f" stroke-width="3.3"/><path d="M0.5 7.5 H15.5 L8 15Z" fill="#1f1f1f"/><circle cx="8" cy="20.5" r="3.3" fill="#1f1f1f"/></svg>
<svg style="left:1023px;top:861px" width="16" height="24" viewBox="0 0 16 24"><path d="M8 6 V15" stroke="#1f1f1f" stroke-width="3.3"/><path d="M0.5 8 H15.5 L8 0.5Z" fill="#1f1f1f"/><circle cx="8" cy="20.5" r="3.3" fill="#1f1f1f"/></svg>
<svg style="left:1068px;top:862px" width="25" height="19" viewBox="0 0 25 19"><rect x="1" y="6.3" width="9" height="5.4" fill="#1f1f1f"/><path d="M8 1.5 L15 9 L8 16.5Z" fill="#1f1f1f"/><circle cx="20" cy="9" r="3.5" fill="#1f1f1f"/></svg>
<svg style="left:1124px;top:861px" width="24" height="24" viewBox="0 0 24 24"><defs><clipPath id="cc"><circle cx="11.5" cy="11.5" r="10.5"/></clipPath></defs><g clip-path="url(#cc)"><rect width="24" height="24" fill="#1f1f1f"/><path d="M0 23 L23 0" stroke="#efefef" stroke-width="6.5"/></g><path d="M1.5 21.5 L21 1.5" stroke="#1f1f1f" stroke-width="2.3"/></svg>
<svg style="left:1174px;top:860px" width="25" height="25" viewBox="0 0 25 25"><path d="M7.5 0.5 H17.5 L24.5 7.5 V17.5 L17.5 24.5 H7.5 L0.5 17.5 V7.5Z" fill="#1f1f1f" stroke="#1f1f1f" stroke-linejoin="round" stroke-width="0.8"/><rect x="7" y="7" width="3.7" height="10" fill="#efefef"/><rect x="14.2" y="7" width="3.7" height="10" fill="#efefef"/></svg>
<div class="a" style="left:843px;top:900px;width:465px;height:1px;background:#c9ccd1;"></div>
<div class="a" style="left:843px;top:901px;width:437px;height:37px;background:#fffec6;"></div>
<div class="a" style="left:865px;top:899px;width:21px;height:4px;background:#8a8a8a;border-radius:0 0 5px 5px"></div>
<div class="a" style="left:1273px;top:901px;width:5px;height:37px;background:#6e5f2e;"></div>
<div class="t" style="left:896.6px;top:912.9px;font-size:19.2px;color:#222;font-weight:400;font-style:normal;font-family:'Liberation Mono';">this.contextObj = context;</div>
<div class="a" style="left:843px;top:938px;width:437px;height:56px;background:#efefef;"></div>
<svg style="left:853px;top:961px" width="13" height="10" viewBox="0 0 13 10"><path d="M0 0 H13 L6.5 10Z" fill="#1f1f1f"/></svg>
<div class="t" style="left:874px;top:957.0px;font-size:21.3px;color:#222;font-weight:400;font-style:normal;font-family:'Liberation Sans';transform:scaleX(0.9166);transform-origin:0 0;">Call Stack</div>
<div class="a" style="left:843px;top:993px;width:437px;height:1px;background:#cfd1d5;"></div>
<div class="a" style="left:843px;top:994px;width:437px;height:339px;background:#ffffff;"></div>
<div class="a" style="left:843px;top:1033px;width:437px;height:1px;background:#e8e8e8;"></div>
<div class="a" style="left:843px;top:1097px;width:437px;height:1px;background:#e8e8e8;"></div>
<div class="a" style="left:843px;top:1161px;width:437px;height:1px;background:#e8e8e8;"></div>
<div class="a" style="left:843px;top:1199px;width:437px;height:1px;background:#e8e8e8;"></div>
<div class="a" style="left:843px;top:1238px;width:437px;height:1px;background:#e8e8e8;"></div>
<div class="a" style="left:843px;top:1302px;width:437px;height:1px;background:#e8e8e8;"></div>
<svg style="left:852px;top:1006px" width="14" height="15" viewBox="0 0 14 15"><path d="M0 4.5 H6.5 V0 L14 7.5 L6.5 15 V10.5 H0Z" fill="#3b7de9"/></svg>
<div class="t" style="left:878.5px;top:1004.2px;font-size:21.7px;color:#222;font-weight:400;font-style:normal;font-family:'Liberation Sans';transform:scaleX(0.9475);transform-origin:0 0;">DataSetGrid.updateView</div>
<div class="t" style="left:1141.609375px;top:1004.2px;font-size:21.7px;color:#5f5f5f;transform:scaleX(0.9257);transform-origin:100% 0">index.ts:71</div>
<div class="t" style="left:878.5px;top:1042.6px;font-size:21.7px;color:#222;font-weight:400;font-style:normal;font-family:'Liberation Sans';transform:scaleX(0.9610);transform-origin:0 0;">t._updateControl</div>
<div class="t" style="left:947.5625px;top:1068.6px;font-size:21.7px;color:#5f5f5f;transform:scaleX(0.9500);transform-origin:100% 0">CustomControlHostRoot.js:584</div>
<div class="t" style="left:878.5px;top:1106.6px;font-size:21.7px;color:#222;font-weight:400;font-style:normal;font-family:'Liberation Sans';transform:scaleX(0.9840);transform-origin:0 0;">t.componentDidUpdate</div>
<div class="t" style="left:935.5px;top:1133.1px;font-size:21.7px;color:#5f5f5f;transform:scaleX(0.9495);transform-origin:100% 0">CustomControlHostRoot.js:1041</div>
<div class="t" style="left:878.5px;top:1171.1px;font-size:21.7px;color:#222;font-weight:400;font-style:normal;font-family:'Liberation Sans';transform:scaleX(1.0836);transform-origin:0 0;">qi</div>
<div class="t" style="left:935.484375px;top:1171.1px;font-size:21.7px;color:#5f5f5f;transform:scaleX(0.9614);transform-origin:100% 0">react-dom.produ...ion.min.js:130</div>
<div class="t" style="left:878.5px;top:1209.1px;font-size:21.7px;color:#222;font-weight:400;font-style:normal;font-family:'Liberation Sans';transform:scaleX(1.0836);transform-origin:0 0;">ui</div>
<div class="t" style="left:935.484375px;top:1209.1px;font-size:21.7px;color:#5f5f5f;transform:scaleX(0.9614);transform-origin:100% 0">react-dom.produ...ion.min.js:133</div>
<div class="t" style="left:878.5px;top:1248.4px;font-size:21.7px;color:#222;font-weight:400;font-style:normal;font-family:'Liberation Sans';transform:scaleX(0.9544);transform-origin:0 0;">(anonymous)</div>
<div class="t" style="left:935.484375px;top:1274.2px;font-size:21.7px;color:#5f5f5f;transform:scaleX(0.9614);transform-origin:100% 0">react-dom.produ...ion.min.js:158</div>
<div class="t" style="left:878.5px;top:1310.9px;font-size:21.7px;color:#222;font-weight:400;font-style:normal;font-family:'Liberation Sans';transform:scaleX(0.9705);transform-origin:0 0;">unstable_runWithPriority</div>
<div class="a" style="left:1280px;top:901px;width:28px;height:432px;background:#f0f0f0;"></div>
<svg style="left:1284px;top:911px" width="13" height="8" viewBox="0 0 13 8"><path d="M0 8 L6.5 0 L13 8Z" fill="#505050"/></svg>
<div class="a" style="left:1281px;top:979px;width:24px;height:152px;background:#bebebe;"></div>
<svg style="left:1285px;top:1315px" width="13" height="8" viewBox="0 0 13 8"><path d="M0 0 L6.5 8 L13 0Z" fill="#505050"/></svg>
<div class="a" style="left:1307px;top:844px;width:1px;height:489px;background:#c9ccd1;"></div>
<div class="a" style="left:1308px;top:844px;width:461px;height:56px;background:#f3f3f3;"></div>
<div class="a" style="left:1405px;top:850px;width:93px;height:48px;background:#ffffff;border-radius:5px"></div>
<div class="t" style="left:1331px;top:863.5px;font-size:21.9px;color:#5f5f5f;font-weight:400;font-style:normal;font-family:'Liberation Sans';transform:scaleX(0.9184);transform-origin:0 0;">Scope</div>
<div class="t" style="left:1422px;top:863.5px;font-size:21.9px;color:#1f1f1f;font-weight:400;font-style:normal;font-family:'Liberation Sans';transform:scaleX(0.9523);transform-origin:0 0;">Watch</div>
<div class="a" style="left:1421px;top:897px;width:58px;height:3px;background:#0f6cde;border-radius:2px"></div>
<div class="a" style="left:1308px;top:900px;width:461px;height:1px;background:#dcdcdc;"></div>
<div class="a" style="left:1308px;top:901px;width:461px;height:5px;background:linear-gradient(#e8e8e8,#fff)"></div>
<div class="a" style="left:1308px;top:906px;width:461px;height:427px;background:#ffffff;"></div>
<svg style="left:1328px;top:920px" width="19" height="17" viewBox="0 0 19 17"><path d="M9.5 0 V17 M0.5 8.5 H18.5" stroke="#1f1f1f" stroke-width="2.4"/></svg>
<svg style="left:1379px;top:916px" width="24" height="24" viewBox="0 0 24 24"><path d="M19.3 12.2 A8.7 8.7 0 1 1 15.8 5.2" fill="none" stroke="#1f1f1f" stroke-width="3.1"/><path d="M20.6 0.4 V9.3 L11.3 9.6Z" fill="#1f1f1f"/></svg>
<div class="a" style="left:1309px;top:956px;width:460px;height:1px;background:#e6e6e6;"></div>
<div class="t" style="left:1443px;top:973.8px;font-size:21.2px;color:#555;font-weight:400;font-style:italic;font-family:'Liberation Sans';transform:scaleX(0.9421);transform-origin:0 0;">No watch expressions</div>
<!-- ===== TITLE BAR ===== -->
<div class="a" style="left:0;top:0;width:1769px;height:72px;background:#cdcdcd"></div>
<div class="a" style="left:0;top:0;width:1769px;height:1px;background:#6a6a6a"></div>
<div class="a" style="left:967px;top:0;width:403px;height:2px;background:#3d6ea5"></div>
<div class="a" style="left:0;top:0;width:1px;height:1333px;background:#6a6a6a;z-index:50"></div>
<!-- sidebar icon -->
<svg style="left:31px;top:33px" width="25" height="24" viewBox="0 0 25 24"><rect x="1" y="1" width="23" height="22" rx="3" fill="none" stroke="#000" stroke-width="2"/><rect x="1" y="1" width="23" height="6" fill="#000"/><line x1="6.5" y1="6" x2="6.5" y2="23" stroke="#000" stroke-width="2"/></svg>
<!-- tab -->
<div class="a" style="left:83px;top:17px;width:421px;height:56px;background:#f7f7f7;border-radius:9px 9px 0 0"></div>
<div class="a" style="left:75px;top:64px;width:8px;height:8px;background:radial-gradient(circle at 0 0,#cdcdcd 7.5px,#f7f7f7 8px)"></div>
<div class="a" style="left:504px;top:64px;width:8px;height:8px;background:radial-gradient(circle at 100% 0,#cdcdcd 7.5px,#f7f7f7 8px)"></div>
<svg style="left:107px;top:31px" width="21" height="29" viewBox="0 0 21 29"><path d="M3 1 H12 L20 9 V25 a3 3 0 0 1 -3 3 H4 a3 3 0 0 1 -3 -3 V4 a3 3 0 0 1 3 -3z M12 1 V7 a2 2 0 0 0 2 2 H20" fill="none" stroke="#000" stroke-width="2" stroke-linejoin="round"/></svg>
<div class="t" style="left:147.5px;top:34.8px;font-size:21.7px;color:#000;transform:scaleX(0.937);transform-origin:0 0">PCF Control Sandbox</div>
<svg style="left:466px;top:37px" width="16" height="16" viewBox="0 0 16 16"><path d="M1 1 L15 15 M15 1 L1 15" stroke="#000" stroke-width="2"/></svg>
<svg style="left:522px;top:32px" width="24" height="24" viewBox="0 0 24 24"><path d="M12 0 V24 M0 12 H24" stroke="#000" stroke-width="2"/></svg>
<!-- window controls -->
<div class="a" style="left:1561px;top:27px;width:18px;height:1px;background:#000"></div>
<div class="a" style="left:1640px;top:19px;width:19px;height:18px;border:1px solid #000"></div>
<svg style="left:1721px;top:19px" width="19" height="19" viewBox="0 0 19 19"><path d="M0.5 0.5 L18.5 18.5 M18.5 0.5 L0.5 18.5" stroke="#000" stroke-width="1.2"/></svg>
<!-- ===== TOOLBAR ===== -->
<div class="a" style="left:0;top:72px;width:1769px;height:68px;background:#f7f7f7"></div>
<div class="a" style="left:0;top:138px;width:1769px;height:1px;background:#e6e6e6"></div><div class="a" style="left:0;top:139px;width:1769px;height:2px;background:#d0d0d0"></div>
<svg style="left:36px;top:93px" width="29" height="25" viewBox="0 0 29 25"><path d="M28 12.5 H2 M13 1 L1.5 12.5 L13 24" fill="none" stroke="#c4c4c4" stroke-width="1.8"/></svg>
<svg style="left:113px;top:93px" width="29" height="25" viewBox="0 0 29 25"><path d="M1 12.5 H27 M16 1 L27.5 12.5 L16 24" fill="none" stroke="#c4c4c4" stroke-width="1.8"/></svg>
<svg style="left:189px;top:91px" width="30" height="30" viewBox="0 0 30 30"><path d="M27.5 12.8 A12.6 12.6 0 1 1 25.6 7.6" fill="none" stroke="#000" stroke-width="1.8"/><path d="M26.4 1 V8.6 H18.8" fill="none" stroke="#000" stroke-width="1.8"/></svg>
<div class="a" style="left:253px;top:80px;width:1182px;height:53px;background:#fff;border-radius:8px"></div>
<svg style="left:277px;top:92px" width="29" height="29" viewBox="0 0 29 29"><circle cx="14.5" cy="14.5" r="13.3" fill="none" stroke="#666" stroke-width="2"/><rect x="13.5" y="7" width="2" height="2.4" fill="#444"/><rect x="13.5" y="11.5" width="2" height="10" fill="#444"/></svg>
<div class="t" style="left:330.5px;top:94.3px;font-size:25px;color:#000;transform:scaleX(0.902);transform-origin:0 0">127.0.0.1<span style="color:#767676">:8181</span></div>
<!-- fav add star -->
<svg style="left:1384px;top:92px" width="34" height="32" viewBox="0 0 34 32"><path d="M14.5 24 L7 28 L8.8 18.6 L1.5 11.5 L10.8 10.3 L15 1.5 L19.2 10.3 L28.5 11.6 L27.5 12.5" fill="none" stroke="#777" stroke-width="1.8" stroke-linejoin="round"/><circle cx="23.3" cy="22" r="7.8" fill="#777"/><path d="M23.3 17.6 V26.4 M18.9 22 H27.7" stroke="#fff" stroke-width="2"/></svg>
<!-- favorites -->
<svg style="left:1468px;top:92px" width="30" height="29" viewBox="0 0 30 29"><path d="M14.5 22.5 L5.5 27 L7.5 17.6 L0.8 11 L9.8 9.8 L14 1.5 L18 9.5" fill="none" stroke="#000" stroke-width="1.9" stroke-linejoin="round"/><path d="M19 9.5 H29 M19 15 H29 M19 20.2 H29" stroke="#000" stroke-width="1.9"/></svg>
<!-- collections -->
<svg style="left:1545px;top:91px" width="31" height="30" viewBox="0 0 31 30"><path d="M6 20.5 a2.5 2.5 0 0 1 -2.8 -1.8 L1.2 6 a2.8 2.8 0 0 1 2.3 -3.3 L14.5 1.2 a2.8 2.8 0 0 1 3.2 2.3 L18 6" fill="none" stroke="#000" stroke-width="1.9"/><rect x="10" y="10" width="19.2" height="18.6" rx="3" fill="none" stroke="#000" stroke-width="1.9"/><path d="M19.6 13.5 V25 M13.8 19.3 H25.4" stroke="#000" stroke-width="1.9"/></svg>
<!-- profile -->
<div class="a" style="left:1621px;top:86px;width:40px;height:40px;border-radius:50%;background:#d3d2d0;overflow:hidden">
 <div class="a" style="left:12px;top:6px;width:16px;height:16px;border-radius:50%;background:#8e8b89"></div>
 <div class="a" style="left:5px;top:25px;width:30px;height:22px;border-radius:50%;background:#8e8b89"></div>
</div>
<svg style="left:1708px;top:103px" width="28" height="6" viewBox="0 0 28 6"><circle cx="3.5" cy="3" r="2.2"/><circle cx="13.5" cy="3" r="2.2"/><circle cx="23.5" cy="3" r="2.2"/></svg>


</body></html>
